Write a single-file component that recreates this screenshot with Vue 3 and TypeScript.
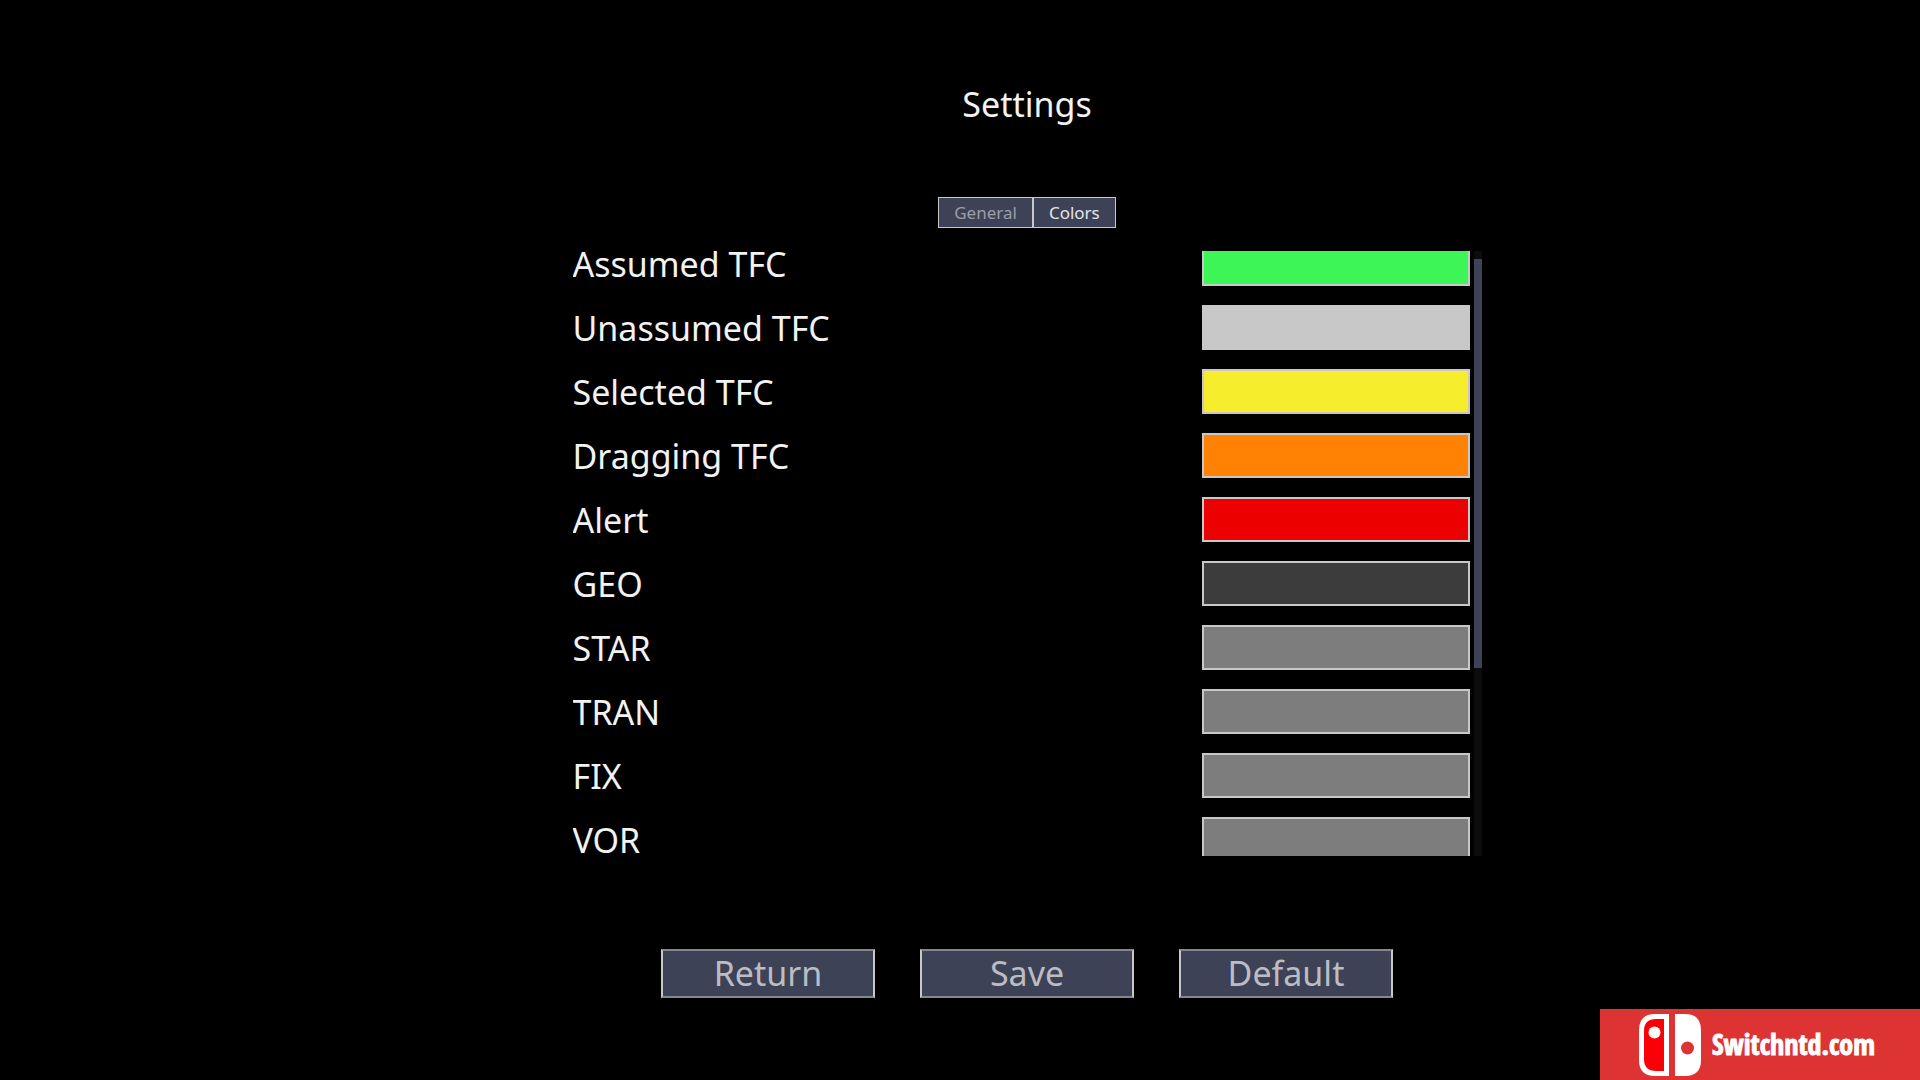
<script setup lang="ts">
import { onMounted, reactive, ref } from 'vue'

interface ColorSetting {
  id: string
  label: string
  value: string
}

const tabs = ['General', 'Colors']
const activeTab = ref('Colors')

const settings = reactive<ColorSetting[]>([
  { id: 'assumed', label: 'Assumed TFC', value: '#3df555' },
  { id: 'unassumed', label: 'Unassumed TFC', value: '#c8c8c8' },
  { id: 'selected', label: 'Selected TFC', value: '#f6ee2d' },
  { id: 'dragging', label: 'Dragging TFC', value: '#ff8205' },
  { id: 'alert', label: 'Alert', value: '#ed0000' },
  { id: 'geo', label: 'GEO', value: '#3c3c3c' },
  { id: 'star', label: 'STAR', value: '#7d7d7d' },
  { id: 'tran', label: 'TRAN', value: '#7d7d7d' },
  { id: 'fix', label: 'FIX', value: '#7d7d7d' },
  { id: 'vor', label: 'VOR', value: '#7d7d7d' },
])

const actions = ['Return', 'Save', 'Default']

const list = ref<HTMLElement | null>(null)
const scrollOffset = 10
const thumb = { start: 8, size: 67.6 }

onMounted(() => {
  if (list.value) list.value.scrollTop = scrollOffset
})
</script>

<template>
  <main class="screen">
    <h1 class="title">Settings</h1>

    <div class="tabs" role="tablist">
      <button
        v-for="tab in tabs"
        :key="tab"
        type="button"
        role="tab"
        class="tab"
        :class="{ active: tab === activeTab }"
        :aria-selected="tab === activeTab"
        @click="activeTab = tab"
      >{{ tab }}</button>
    </div>

    <section class="panel">
      <div ref="list" class="list">
        <div v-for="item in settings" :key="item.id" class="row">
          <label class="label" :for="item.id">{{ item.label }}</label>
          <input :id="item.id" v-model="item.value" class="swatch" type="color" />
        </div>
      </div>
      <div class="track">
        <div class="thumb" :style="{ marginTop: thumb.start + 'px', height: thumb.size + '%' }"></div>
      </div>
    </section>

    <div class="actions">
      <button v-for="action in actions" :key="action" type="button" class="action">{{ action }}</button>
    </div>

    <aside class="badge">
      <svg class="badge-icon" viewBox="0 0 62 62" aria-hidden="true">
        <path d="M30 0H16Q0 0 0 16V46Q0 62 16 62H30Z" fill="#fff" />
        <path d="M25 5H17Q5 5 5 17V45Q5 57 17 57H25Z" fill="#fb0007" />
        <circle cx="15.5" cy="18.500" r="6" fill="#fff" />
        <path d="M36 0H46Q62 0 62 16V46Q62 62 46 62H36Z" fill="#fff" />
        <circle cx="48.500" cy="34" r="6.500" fill="#dd3333" />
      </svg>
      <span class="badge-text">Switchntd.com</span>
    </aside>
  </main>
</template>

<style>
body {
  background: #000;
}
</style>

<style scoped>
.screen {
  box-sizing: border-box;
  position: relative;
  display: flex;
  flex-direction: column;
  align-items: center;
  min-height: 100vh;
  padding: 80px 0 80px 134px;
  background: #000;
  color: #f2f2f2;
  font-family: "Noto Sans", "Open Sans", sans-serif;
  font-size: 34px;
  overflow: hidden;
}

button {
  font-family: inherit;
  padding: 0;
  margin: 0;
  border-radius: 0;
  background: #3d4257;
}

.title {
  margin: 0 0 69px;
  font-size: 34px;
  font-weight: 400;
  line-height: 48px;
}

.tabs {
  display: flex;
  margin-bottom: 23px;
}

.tab {
  padding: 0 15px;
  border: 1px solid #c8c8c8;
  font-size: 17px;
  line-height: 29px;
  color: #9c9ea8;
}

.tab.active {
  color: #e4e4e8;
}

.panel {
  display: flex;
  gap: 4px;
  width: 100%;
  max-width: 909px;
  height: calc(100vh - 475px);
  margin-bottom: 93px;
}

.list {
  flex: 1;
  overflow-y: scroll;
  scrollbar-width: none;
}

.row {
  display: flex;
  align-items: center;
  justify-content: space-between;
  height: 45px;
  margin-bottom: 19px;
}

.label {
  line-height: 32px;
}

.swatch {
  box-sizing: border-box;
  width: 268px;
  height: 45px;
  padding: 0;
  border: 2px solid #c8c8c8;
  border-radius: 0;
  background: none;
  appearance: none;
}

.swatch::-webkit-color-swatch-wrapper {
  padding: 0;
}

.swatch::-webkit-color-swatch {
  border: 0;
  border-radius: 0;
}

.track {
  width: 8px;
  background: #0c0c0c;
}

.thumb {
  background: #3d4257;
}

.actions {
  display: flex;
  gap: 45px;
}

.action {
  box-sizing: border-box;
  width: 214px;
  height: 49px;
  border: 2px solid;
  border-color: #85868f #c8c8c8;
  font-size: 34px;
  line-height: 45px;
  color: #bcbdc3;
}

.badge {
  box-sizing: border-box;
  position: absolute;
  right: 0;
  bottom: 0;
  display: flex;
  align-items: center;
  gap: 11px;
  width: 320px;
  height: 71px;
  padding-left: 39px;
  background: #dd3333;
  color: #fff;
}

.badge-icon {
  width: 62px;
  height: 62px;
}

.badge-text {
  padding-bottom: 2px;
  font-family: "Liberation Sans Narrow", "Open Sans Condensed", "Liberation Sans", sans-serif;
  font-size: 28px;
  font-weight: 700;
  line-height: 32px;
  -webkit-text-stroke: 1px #fff;
}
</style>
